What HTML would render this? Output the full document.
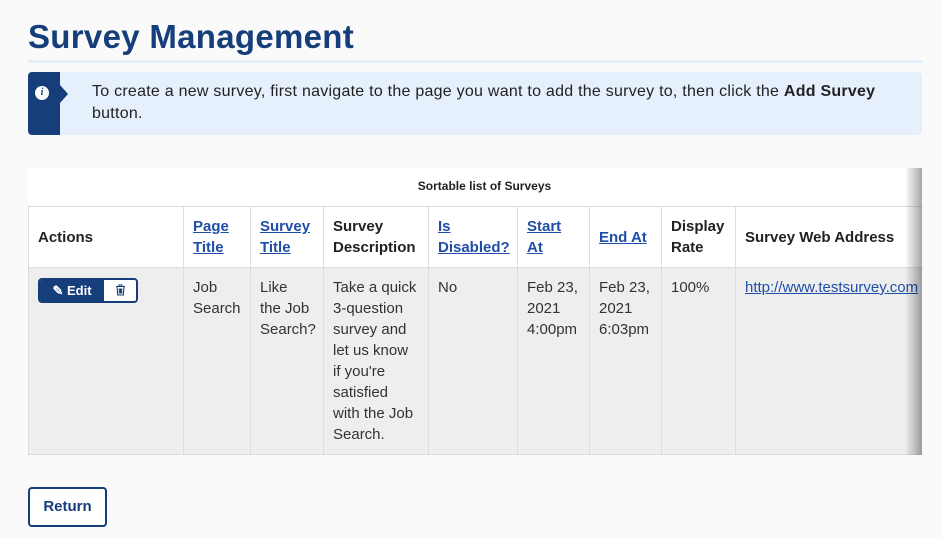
<!DOCTYPE html>
<html><head><style>
body{margin:0;background:#fafafa;font-family:"Liberation Sans",sans-serif;width:941px;height:538px;overflow:hidden;position:relative;color:#222}
h1{position:absolute;left:28px;top:18px;margin:0;font-size:33px;color:#153e7b;font-weight:bold;letter-spacing:0.3px}
.rule{position:absolute;left:28px;top:60px;width:894px;height:3px;background:#e3eefb}
.alert{position:absolute;left:28px;top:72px;width:894px;height:63px;background:#e6f0fc;border-radius:4px;overflow:hidden}
.alert .bar{position:absolute;left:0;top:0;width:32px;height:63px;background:#153e7b}
.alert .arr{position:absolute;left:32px;top:13px;width:0;height:0;border-top:9px solid transparent;border-bottom:9px solid transparent;border-left:8px solid #153e7b}
.alert .ic{position:absolute;left:7px;top:14px;width:14px;height:14px;border-radius:50%;background:#fff;color:#153e7b;font:italic bold 10px "Liberation Serif",serif;text-align:center;line-height:14px}
.alert p{position:absolute;left:64px;top:9px;margin:0;font-size:16px;line-height:22px;width:820px;color:#222;letter-spacing:0.25px}
.wrap{position:absolute;left:28px;top:168px;width:894px;height:287px;background:#fff;overflow:hidden}
.shadow{position:absolute;left:905px;top:168px;width:17px;height:287px;background:linear-gradient(to right,rgba(0,0,0,0),rgba(0,0,0,0.35))}
.cap{position:absolute;left:0;width:913px;top:11px;text-align:center;font-size:12px;font-weight:bold}
table{position:absolute;left:0;top:38px;border-collapse:collapse;font-size:15px;line-height:21px;table-layout:fixed;width:1010px}
th,td{border:1px solid #ddd;vertical-align:top;text-align:left;padding:0 9px;overflow:hidden;white-space:nowrap}
th{height:60px;vertical-align:middle;font-weight:bold}
td{background:#eee;height:177px;padding-top:9px;color:#333}
a{color:#1f4ea8}
.btn{display:inline-block;margin-top:1px;border:2px solid #153e7b;border-radius:4px;height:21px;overflow:hidden;font-size:13px}
.btn span{display:inline-block;height:21px;line-height:21px;vertical-align:top}
.e{background:#153e7b;color:#fff;font-weight:bold;width:64px;text-align:center}
.t{width:32px;background:#fff;text-align:center}
.ret{position:absolute;left:28px;top:487px;width:75px;height:36px;border:2px solid #153e7b;border-radius:4px;background:#fff;color:#153e7b;font-weight:bold;font-size:15px;text-align:center;line-height:36px}
</style></head><body>
<h1>Survey Management</h1>
<div class="rule"></div>
<div class="alert"><div class="bar"></div><div class="arr"></div><div class="ic">i</div>
<p>To create a new survey, first navigate to the page you want to add the survey to, then click the <b>Add Survey</b><br>button.</p></div>
<div class="wrap">
<div class="cap">Sortable list of Surveys</div>
<table>
<colgroup><col style="width:155px"><col style="width:67px"><col style="width:73px"><col style="width:105px"><col style="width:89px"><col style="width:72px"><col style="width:72px"><col style="width:74px"><col style="width:303px"></colgroup>
<tr><th>Actions</th><th><a href="#">Page<br>Title</a></th><th><a href="#">Survey<br>Title</a></th><th>Survey<br>Description</th><th><a href="#">Is<br>Disabled?</a></th><th><a href="#">Start<br>At</a></th><th><a href="#">End At</a></th><th>Display<br>Rate</th><th>Survey Web Address</th></tr>
<tr><td><span class="btn"><span class="e">&#9998; Edit</span><span class="t"><svg width="11" height="12" viewBox="0 0 11 12" style="margin-top:4px"><path d="M1 2.5h9M4 2.5V1h3v1.5M2 2.5l.7 8.5h5.6L9 2.5M4.3 4.5v5M5.5 4.5v5M6.7 4.5v5" fill="none" stroke="#153e7b" stroke-width="1.1"/></svg></span></span></td><td>Job<br>Search</td><td>Like<br>the Job<br>Search?</td><td>Take a quick<br>3-question<br>survey and<br>let us know<br>if you're<br>satisfied<br>with the Job<br>Search.</td><td>No</td><td>Feb 23,<br>2021<br>4:00pm</td><td>Feb 23,<br>2021<br>6:03pm</td><td>100%</td><td><a href="#">http://www.testsurvey.com</a></td></tr>
</table></div>
<div class="shadow"></div>
<div class="ret">Return</div>
</body></html>
